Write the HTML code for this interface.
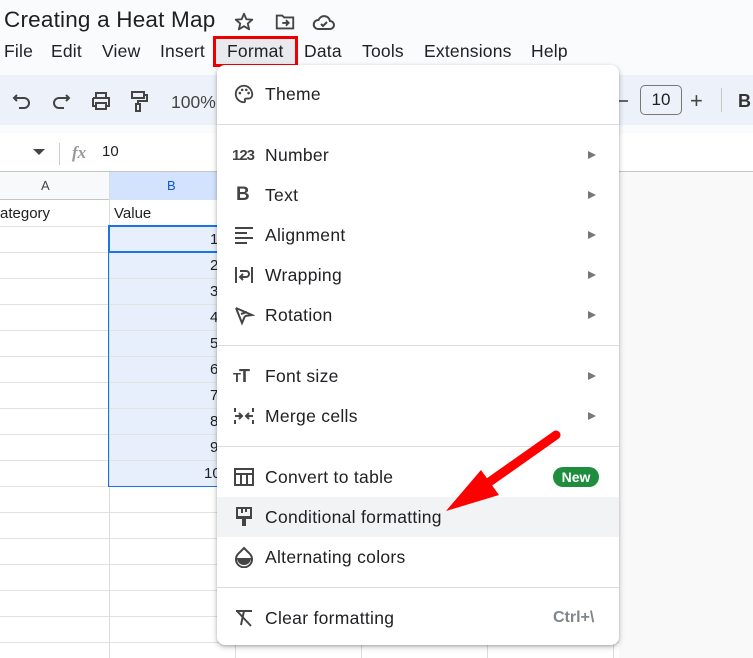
<!DOCTYPE html>
<html><head><meta charset="utf-8"><style>
*{margin:0;padding:0;box-sizing:border-box}
body{width:753px;height:658px;overflow:hidden;background:#f9fbfd;font-family:"Liberation Sans",Arial,sans-serif;position:relative;color:#202124}
.a{position:absolute}
.menu{position:absolute;left:217px;top:65px;width:402px;height:580px;background:#fff;border-radius:8px;box-shadow:0 2px 6px rgba(0,0,0,.25),0 1px 2px rgba(0,0,0,.15)}
.it{position:absolute;left:48px;font-size:17.5px;letter-spacing:0.3px;color:#202124;line-height:20px}
.ic{position:absolute;left:16px;width:22px;height:22px}
.ar{position:absolute;left:371px;width:0;height:0;border-top:4px solid transparent;border-bottom:4px solid transparent;border-left:8px solid #777}
.sep{position:absolute;left:0;right:0;height:1px;background:#dadce0}
.hl{position:absolute;left:0;right:0;height:40px;background:#f1f3f4}
.cell{position:absolute;font-size:15px}
.mb{position:absolute;top:41px;font-size:17.5px;letter-spacing:0.2px}
</style></head><body>
<div class="a" style="left:4px;top:7px;font-size:22.5px;letter-spacing:0.2px;color:#1f1f1f">Creating a Heat Map</div>
<svg class="a" style="left:233px;top:11px" width="22" height="22" viewBox="0 0 24 24"><path d="M12 3l2.6 6 6.4.5-4.9 4.2 1.5 6.3L12 16.6 6.4 20l1.5-6.3L3 9.5l6.4-.5z" fill="none" stroke="#444" stroke-width="2" stroke-linejoin="round"/></svg>
<svg class="a" style="left:274px;top:11px" width="22" height="22" viewBox="0 0 24 24"><path d="M3 5h6l2 2h10v12H3z" fill="none" stroke="#444" stroke-width="2"/><path d="M9 13h7M13 10l3 3-3 3" fill="none" stroke="#444" stroke-width="2"/></svg>
<svg class="a" style="left:312px;top:11px" width="24" height="22" viewBox="0 0 24 22"><path d="M6 18h12a4 4 0 0 0 0-8 6 6 0 0 0-11.5-1A4.5 4.5 0 0 0 6 18z" fill="none" stroke="#444" stroke-width="2"/><path d="M9 13l2 2 4-4" fill="none" stroke="#444" stroke-width="2"/></svg>
<div class="mb" style="left:4px">File</div>
<div class="mb" style="left:51px">Edit</div>
<div class="mb" style="left:102px">View</div>
<div class="mb" style="left:160px">Insert</div>
<div class="a" style="top:36px;left:213px;width:85px;height:31px;border:3px solid #e00;background:#e8eaed"></div>
<div class="mb" style="left:227px">Format</div>
<div class="mb" style="left:304px">Data</div>
<div class="mb" style="left:362px">Tools</div>
<div class="mb" style="left:424px">Extensions</div>
<div class="mb" style="left:531px">Help</div>
<div class="a" style="left:0;top:75px;width:753px;height:50px;background:#edf2fa"></div>
<svg class="a" style="left:12px;top:91px" width="20" height="20" viewBox="0 0 20 20"><path d="M5 4L2 7l3 3M2 7h10a5 5 0 0 1 0 10H7" fill="none" stroke="#444" stroke-width="2"/></svg>
<svg class="a" style="left:51px;top:91px" width="20" height="20" viewBox="0 0 20 20"><path d="M15 4l3 3-3 3M18 7H8a5 5 0 0 0 0 10h5" fill="none" stroke="#444" stroke-width="2"/></svg>
<svg class="a" style="left:90px;top:90px" width="22" height="22" viewBox="0 0 22 22"><path d="M6 8V3h10v5M3 8h16v8h-3M6 16H3V8M6 13h10v6H6z" fill="none" stroke="#444" stroke-width="2"/></svg>
<svg class="a" style="left:129px;top:89px" width="20" height="24" viewBox="0 0 20 24"><path d="M3 3h12v6H3zM15 6h3v6H9v3M7 15h4v7H7z" fill="none" stroke="#444" stroke-width="2"/></svg>
<div class="a" style="left:171px;top:92px;font-size:17.5px;color:#444">100%</div>
<div class="a" style="left:619px;top:100px;width:9px;height:2px;background:#666"></div>
<div class="a" style="left:640px;top:85px;width:42px;height:30px;border:1px solid #777;border-radius:5px;font-size:17px;text-align:center;line-height:28px">10</div>
<div class="a" style="left:690px;top:88px;font-size:22px;color:#444">+</div>
<div class="a" style="left:721px;top:88px;width:1px;height:24px;background:#c7c7c7"></div>
<div class="a" style="left:738px;top:91px;font-size:18px;font-weight:bold;color:#333">B</div>
<div class="a" style="left:0;top:133px;width:753px;height:38px;background:#fff"></div>
<div class="a" style="left:33px;top:149px;border-left:6px solid transparent;border-right:6px solid transparent;border-top:6px solid #444"></div>
<div class="a" style="left:59px;top:143px;width:1px;height:22px;background:#ccc"></div>
<div class="a" style="left:72px;top:143px;font-size:17px;font-style:italic;color:#999;font-family:'Liberation Serif',serif;font-weight:bold">fx</div>
<div class="a" style="left:102px;top:143px;font-size:15px">10</div>
<div class="a" style="left:0;top:171px;width:753px;height:1px;background:#c4c7c5"></div>
<div class="a" style="left:0;top:172px;width:753px;height:486px;background:#f8f9f8"></div>
<div class="a" style="left:0;top:172px;width:619px;height:486px;background:#fff"></div>
<div class="a" style="left:0;top:172px;width:619px;height:28px;background:#f8f9fa;border-bottom:1px solid #c4c7c5"></div>
<div class="a" style="left:109px;top:172px;width:126px;height:28px;background:#d3e3fd"></div>
<div class="a" style="left:41px;top:178px;font-size:13px;color:#444">A</div>
<div class="a" style="left:167px;top:178px;font-size:13px;color:#0b57d0">B</div>
<div class="a" style="left:109px;top:226px;width:126px;height:260px;background:#e8effc"></div>
<div id="g"></div>
<div class="a" style="left:109px;top:172px;width:1px;height:486px;background:#dadce0"></div>
<div class="a" style="left:235px;top:172px;width:1px;height:486px;background:#dadce0"></div>
<div class="a" style="left:361px;top:172px;width:1px;height:486px;background:#dadce0"></div>
<div class="a" style="left:487px;top:172px;width:1px;height:486px;background:#dadce0"></div>
<div class="a" style="left:613px;top:172px;width:1px;height:486px;background:#dadce0"></div>
<div class="a" style="left:108px;top:226px;width:128px;height:261px;border:1px solid #1a73e8"></div>
<div class="a" style="left:108px;top:225px;width:128px;height:28px;border:2px solid #1a73e8"></div>
<div class="cell" style="left:0;top:205px">ategory</div>
<div class="cell" style="left:114px;top:205px">Value</div>
<div class="cell" style="left:210px;top:231px">1</div>
<div class="cell" style="left:210px;top:257px">2</div>
<div class="cell" style="left:210px;top:283px">3</div>
<div class="cell" style="left:210px;top:309px">4</div>
<div class="cell" style="left:210px;top:335px">5</div>
<div class="cell" style="left:210px;top:361px">6</div>
<div class="cell" style="left:210px;top:387px">7</div>
<div class="cell" style="left:210px;top:413px">8</div>
<div class="cell" style="left:210px;top:439px">9</div>
<div class="cell" style="left:204px;top:465px">10</div>
<div class="menu">
<svg class="ic" style="top:18px" viewBox="0 0 24 24"><path d="M12 3a9 9 0 0 0 0 18c1.2 0 1.5-1 1-2-.6-1 0-2 1.2-2H17a4 4 0 0 0 4-4c0-5.5-4-10-9-10z" fill="none" stroke="#444" stroke-width="2"/><circle cx="7.5" cy="11" r="1.4" fill="#444"/><circle cx="10" cy="7.5" r="1.4" fill="#444"/><circle cx="14.5" cy="7.5" r="1.4" fill="#444"/><circle cx="17" cy="11" r="1.4" fill="#444"/></svg>
<div class="it" style="top:19px">Theme</div>
<div class="sep" style="top:59px"></div>
<div class="a" style="left:15px;top:82px;font-size:15px;font-weight:bold;color:#444;letter-spacing:-1px">123</div>
<div class="it" style="top:80px">Number</div><div class="ar" style="top:86px"></div>
<div class="a" style="left:19px;top:119px;font-size:19px;font-weight:bold;color:#444">B</div>
<div class="it" style="top:120px">Text</div><div class="ar" style="top:126px"></div>
<svg class="ic" style="top:159px" viewBox="0 0 22 22"><path d="M2 4h18M2 9h12M2 14h18M2 19h12" stroke="#444" stroke-width="2"/></svg>
<div class="it" style="top:160px">Alignment</div><div class="ar" style="top:166px"></div>
<svg class="ic" style="top:199px" viewBox="0 0 22 22"><path d="M3 3v16M19 3v16M7 7h6a3 3 0 0 1 0 6H8M10 10l-3 3 3 3" fill="none" stroke="#444" stroke-width="2"/></svg>
<div class="it" style="top:200px">Wrapping</div><div class="ar" style="top:206px"></div>
<svg class="ic" style="top:239px" viewBox="0 0 22 22"><path d="M3 4l6 15 3-7M3 4l16 7-7 1M8 10l6-2" fill="none" stroke="#444" stroke-width="2"/></svg>
<div class="it" style="top:240px">Rotation</div><div class="ar" style="top:246px"></div>
<div class="sep" style="top:280px"></div>
<div class="a" style="left:16px;top:301px;font-size:18px;font-weight:bold;color:#444;letter-spacing:-2px"><span style="font-size:13px">T</span>T</div>
<div class="it" style="top:301px">Font size</div><div class="ar" style="top:307px"></div>
<svg class="ic" style="top:340px" viewBox="0 0 22 22"><path d="M2 3v4M2 15v4M20 3v4M20 15v4M2 11h6M6 8l3 3-3 3M20 11h-6M16 8l-3 3 3 3" fill="none" stroke="#444" stroke-width="2"/></svg>
<div class="it" style="top:341px">Merge cells</div><div class="ar" style="top:347px"></div>
<div class="sep" style="top:381px"></div>
<svg class="ic" style="top:401px" viewBox="0 0 22 22"><rect x="2" y="3" width="18" height="16" fill="none" stroke="#444" stroke-width="2"/><path d="M2 8h18M8 8v11M14 8v11" stroke="#444" stroke-width="2"/></svg>
<div class="it" style="top:402px">Convert to table</div>
<div class="a" style="left:336px;top:402px;width:46px;height:20px;border-radius:10px;background:#1e8e3e;color:#fff;font-size:14px;font-weight:bold;text-align:center;line-height:20px">New</div>
<div class="hl" style="top:432px"></div>
<svg class="ic" style="top:441px" viewBox="0 0 22 22"><path d="M4 2h14v10H4z" fill="none" stroke="#444" stroke-width="2"/><path d="M4 10h14v3H4zM9 13h4v7H9z" fill="#444"/><path d="M9 3v4M13 3v3" stroke="#444" stroke-width="2"/></svg>
<div class="it" style="top:442px">Conditional formatting</div>
<svg class="ic" style="top:481px" viewBox="0 0 22 22"><path d="M11 2l6 6a8 8 0 1 1-12 0z" fill="none" stroke="#444" stroke-width="2"/><path d="M4 12h14a7 7 0 0 1-14 0z" fill="#444"/></svg>
<div class="it" style="top:482px">Alternating colors</div>
<div class="sep" style="top:522px"></div>
<svg class="ic" style="top:542px" viewBox="0 0 22 22"><path d="M3 4h16M11 4l-3 14M4 4l14 15" fill="none" stroke="#444" stroke-width="2"/></svg>
<div class="it" style="top:543px">Clear formatting</div>
<div class="a" style="left:336px;top:544px;font-size:16px;color:#80868b;font-weight:bold">Ctrl+\</div>
</div>
<svg class="a" style="left:0;top:0" width="753" height="658"><line x1="556" y1="435" x2="478" y2="490" stroke="#f00" stroke-width="9" stroke-linecap="round"/><polygon points="446,511 481,470 499,495" fill="#f00"/></svg>
<script>
var g=document.getElementById('g'),h='';
for(var y=226;y<=642;y+=26)h+='<div class="a" style="left:0;top:'+y+'px;width:619px;height:1px;background:#e1e3e1"></div>';
g.innerHTML=h;
</script>
</body></html>
